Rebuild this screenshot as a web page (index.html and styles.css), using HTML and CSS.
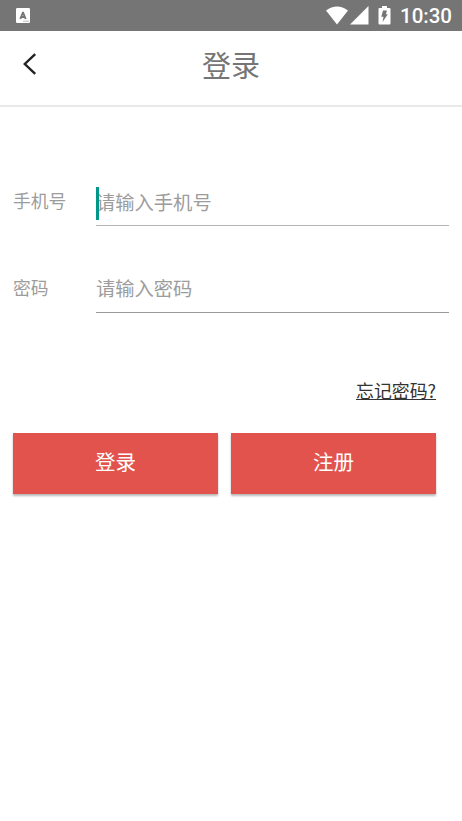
FILE: index.html
```html
<!DOCTYPE html>
<html lang="zh-CN">
<head>
<meta charset="utf-8">
<title>登录</title>
<link rel="stylesheet" href="styles.css">
</head>
<body>
<div class="status">
  <svg class="ime" width="14" height="15" viewBox="0 0 14 15"><rect width="14" height="15" rx="1.2" fill="#fff"/><path d="M4.3 11 6.9 4.6h.2L9.7 11M5.4 9h3.2" fill="none" stroke="#757575" stroke-width="1.9"/><path d="M7.5 13.2h1M9.5 13.2h1M11.5 13.2h1" stroke="#757575"/></svg>
  <svg class="wifi" width="24" height="19" viewBox="0 0 24 19"><path d="M1 4.5Q12-3.5 23 4.5L12 18.5Z" fill="#fff"/></svg>
  <svg class="signal" width="19" height="19" viewBox="0 0 19 19"><path d="M18.5 0v18.5H0Z" fill="#fff"/></svg>
  <svg class="battery" width="13" height="19" viewBox="0 0 13 19"><path d="M4 0h5v2h2.5a1 1 0 0 1 1 1v14.5a1 1 0 0 1-1 1h-10a1 1 0 0 1-1-1V3a1 1 0 0 1 1-1H4Z" fill="#fff"/><path d="M5 4.5h4L7.8 8.2h2L4.6 16l.9-5.2H3.3Z" fill="#757575"/></svg>
  <span class="clock">10:30</span>
</div>
<header class="header">
  <svg class="back" width="14" height="22" viewBox="0 0 14 22"><path d="M12.2 1.2 1.8 11l10.4 9.8" fill="none" stroke="#222" stroke-width="2.4"/></svg>
  <h1 class="title">登录</h1>
</header>
<main class="form">
  <div class="row row-phone">
    <label class="label">手机号</label>
    <div class="field"><i class="caret"></i><span>请输入手机号</span></div>
  </div>
  <div class="row row-password">
    <label class="label">密码</label>
    <div class="field"><span>请输入密码</span></div>
  </div>
  <a class="forgot">忘记密码?</a>
  <div class="actions">
    <button class="button">登录</button>
    <button class="button">注册</button>
  </div>
</main>
</body>
</html>
```
FILE: styles.css
```css
* { box-sizing: border-box; }
body {
  margin: 0;
  height: 821px;
  overflow: hidden;
  background: #fff;
  font-family: Roboto, "Noto Sans CJK SC", sans-serif;
}
.status {
  display: flex;
  align-items: center;
  height: 31px;
  padding: 0 10px 0 16px;
  background: #757575;
}
.status svg { flex: none; }
.wifi { margin-left: auto; }
.signal { margin-left: 1px; }
.battery { margin-left: 9px; }
.clock {
  width: 52px;
  height: 31px;
  margin-left: 9px;
  color: #fff;
  font-size: 20.5px;
  font-weight: 500;
  line-height: 33px;
  white-space: nowrap;
}
.header {
  display: grid;
  grid-template-columns: 60px 1fr 60px;
  height: 76px;
  border-bottom: 2px solid #e9e9e9;
}
.back { margin: 22px 0 0 23px; }
.title {
  margin: 14px 0 0;
  color: #757575;
  font-size: 29px;
  font-weight: 400;
  line-height: 44px;
  text-align: center;
}
.form { padding: 73px 13px 0; }
.row {
  display: grid;
  grid-template-columns: 83px 1fr;
  height: 46px;
  color: #9c9c9c;
}
.row-password { margin-top: 41px; }
.label {
  font-size: 17.8px;
  line-height: 44px;
}
.field {
  position: relative;
  height: 46px;
  border-bottom: 1px solid #b5b5b5;
  font-size: 19.3px;
  line-height: 47px;
}
.row-password .field {
  border-color: #999;
  line-height: 46px;
}
.caret {
  position: absolute;
  left: 0;
  top: 7px;
  width: 3px;
  height: 33px;
  background: #009688;
}
.forgot {
  display: block;
  width: 80px;
  height: 20px;
  margin: 67px 13px 0 auto;
  border-bottom: 1px solid #333;
  color: #333;
  font-family: "Noto Sans CJK SC", sans-serif;
  font-size: 17.9px;
  line-height: 20px;
  white-space: nowrap;
}
.actions {
  display: grid;
  grid-template-columns: 205px 205px;
  gap: 13px;
  margin-top: 33px;
}
.button {
  height: 61px;
  padding: 0 0 2px;
  border: 0;
  background: #e2534d;
  box-shadow: 0 2px 2px rgba(0, 0, 0, .28);
  color: #fff;
  font: 400 20.5px/30px Roboto, "Noto Sans CJK SC", sans-serif;
}
```
